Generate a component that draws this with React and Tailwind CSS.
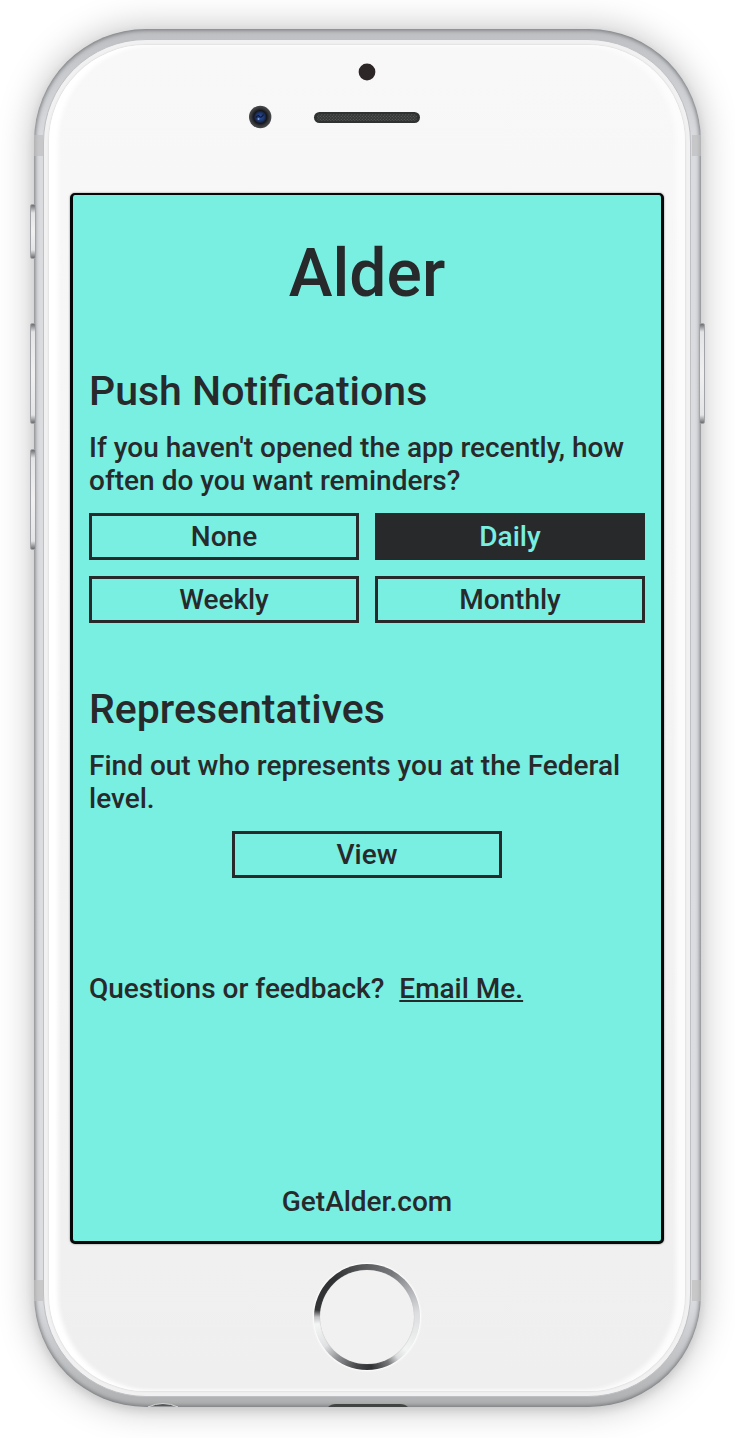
import { useState } from "react";

const FREQUENCIES = ["None", "Daily", "Weekly", "Monthly"];

function OptionButton({ active = false, className = "", children, ...props }) {
  const colours = active ? "bg-[#28292b] text-[#78efe1]" : "bg-transparent text-[#28292b]";
  return (
    <button
      type="button"
      className={`h-[47px] cursor-pointer border-3 border-[#28292b] pb-px text-[28px] leading-[33px] font-medium ${colours} ${className}`}
      {...props}
    >
      {children}
    </button>
  );
}

function Section({ title, text, children }) {
  return (
    <section className="flex flex-col gap-4">
      <h2 className="text-[41px] leading-[48px] font-medium">{title}</h2>
      <p className="text-[28px] leading-[33px]">{text}</p>
      {children}
    </section>
  );
}

function SettingsScreen() {
  const [frequency, setFrequency] = useState("Daily");
  return (
    <main className="rounded-[5px] border-x-3 border-t-2 border-b-[3px] border-[#050808] bg-[#78efe1] px-4 pt-10 pb-[23px] font-medium text-[#28292b] shadow-[0_0_2px_#777]">
      <h1 className="text-center text-[66px] leading-[78px] font-medium">Alder</h1>
      <div className="mt-[54px] flex flex-col gap-[62px]">
        <Section
          title="Push Notifications"
          text="If you haven't opened the app recently, how often do you want reminders?"
        >
          <div className="grid grid-cols-2 gap-4">
            {FREQUENCIES.map((name) => (
              <OptionButton
                key={name}
                active={name === frequency}
                aria-pressed={name === frequency}
                onClick={() => setFrequency(name)}
              >
                {name}
              </OptionButton>
            ))}
          </div>
        </Section>
        <Section
          title="Representatives"
          text="Find out who represents you at the Federal level."
        >
          <OptionButton className="w-[270px] self-center">View</OptionButton>
        </Section>
      </div>
      <p className="mt-[94px] flex gap-[15px] text-[28px] leading-[33px]">
        Questions or feedback?
        <a href="#email" className="underline decoration-2 underline-offset-2">Email Me.</a>
      </p>
      <p className="mt-[180px] text-center text-[28px] leading-[33px]">GetAlder.com</p>
    </main>
  );
}

function Sensors() {
  return (
    <svg width="240" height="72" viewBox="247 61 240 72" aria-hidden="true">
      <defs>
        <radialGradient id="lens">
          <stop offset="0" stopColor="#2c55a8" />
          <stop offset="0.4" stopColor="#1c3263" />
          <stop offset="0.58" stopColor="#15171d" />
          <stop offset="0.8" stopColor="#37383a" />
          <stop offset="1" stopColor="#4a4b4d" />
        </radialGradient>
        <pattern id="mesh" width="3" height="3" patternUnits="userSpaceOnUse">
          <rect width="3" height="3" fill="#353737" />
          <circle cx="0.8" cy="0.8" r="0.6" fill="#606363" />
          <circle cx="2.3" cy="2.3" r="0.6" fill="#606363" />
        </pattern>
      </defs>
      <circle cx="367" cy="72" r="8.4" fill="#2d2627" />
      <circle cx="260.2" cy="117" r="11.2" fill="url(#lens)" />
      <path d="M256 117.500q2-3 3.500-1t4-2" stroke="#0c1530" strokeWidth="1.200" fill="none" />
      <circle cx="258.500" cy="119" r="1" fill="#7fa0e0" />
      <rect x="314" y="112" width="106" height="11" rx="5.500" fill="#303232" />
      <rect x="317" y="114" width="100" height="7" rx="3.500" fill="url(#mesh)" />
    </svg>
  );
}

function SideKey({ className }) {
  return (
    <span
      aria-hidden="true"
      className={`absolute z-10 w-[6px] rounded-[2px] border border-[#a3a4a7] bg-[linear-gradient(#6c6d70,#e4e5e7_8px,#f0f0f1_50%,#e4e5e7_calc(100%-8px),#6c6d70)] ${className}`}
    />
  );
}

function AntennaBand({ className }) {
  return <span aria-hidden="true" className={`absolute h-[21px] w-[9px] bg-[#bfbfbf]/70 ${className}`} />;
}

function Phone({ children }) {
  return (
    <div className="relative">
      <SideKey className="top-[175px] -left-1 h-[55px]" />
      <SideKey className="top-[294px] -left-1 h-[101px]" />
      <SideKey className="top-[420px] -left-1 h-[101px]" />
      <SideKey className="top-[294px] -right-1 h-[101px]" />
      <div className="relative rounded-[112px] bg-[linear-gradient(#bdbfc2,#d9dbdf_110px,#dcdde1_calc(100%-110px),#adafb0)] py-[10px] pr-[10px] pl-[9px] shadow-[0_0_36px_rgba(0,0,0,0.26),0_4px_10px_rgba(0,0,0,0.1),inset_0_0_4px_1px_#6f7174]">
        <AntennaBand className="top-[106px] left-0" />
        <AntennaBand className="top-[106px] right-0" />
        <AntennaBand className="bottom-[106px] left-0" />
        <AntennaBand className="right-0 bottom-[106px]" />
        <div className="rounded-[103px] border border-[#bfc0c3] bg-[#f1f1f2] p-[5px]">
          <div className="rounded-[97px] bg-linear-to-b from-[#f8f8f8] to-[#efefef] px-[21px] pt-4 pb-[21px] shadow-[0_0_2px_#c4c4c6,inset_9px_0_4px_#fff,inset_-9px_0_4px_#fcfcfc]">
            <div className="flex justify-center pb-[60px]">
              <Sensors />
            </div>
            {children}
            <div className="flex justify-center pt-5">
              <button
                type="button"
                aria-label="Home"
                className="size-[106px] rounded-full bg-[conic-gradient(#5c5d5f,#77787b_30deg,#b4b5b8_60deg,#dcdddf_85deg,#f3f5f4_130deg,#dcdddd_143deg,#77787a_155deg,#303133_175deg,#47484a_192deg,#8e8f92_215deg,#e0e1e2_235deg,#f4f5f5_262deg,#c4c4c6_270deg,#333436_278deg,#303133_320deg,#5c5d5f)] p-[6px] shadow-[0_0_2px_1px_#fff]"
              >
                <span className="block size-full rounded-full bg-[#f1f1f1] shadow-[0_0_1px_#aaa]" />
              </button>
            </div>
          </div>
        </div>
        <svg className="absolute bottom-0 left-[112px]" width="34" height="5" viewBox="0 0 34 5" aria-hidden="true">
          <path d="M2 5Q17-2 32 5Z" fill="#56585a" stroke="#d3d5d4" />
        </svg>
        <svg className="absolute bottom-0 left-1/2 -ml-10" width="80" height="4" viewBox="0 0 80 4" aria-hidden="true">
          <path d="M0 4Q3 1 8 1H72Q77 1 80 4Z" fill="#424443" />
        </svg>
      </div>
    </div>
  );
}

export default function App() {
  return (
    <div className="bg-white px-[34px] pt-[29px] pb-[31px] font-['Roboto',sans-serif]">
      <Phone>
        <SettingsScreen />
      </Phone>
    </div>
  );
}
